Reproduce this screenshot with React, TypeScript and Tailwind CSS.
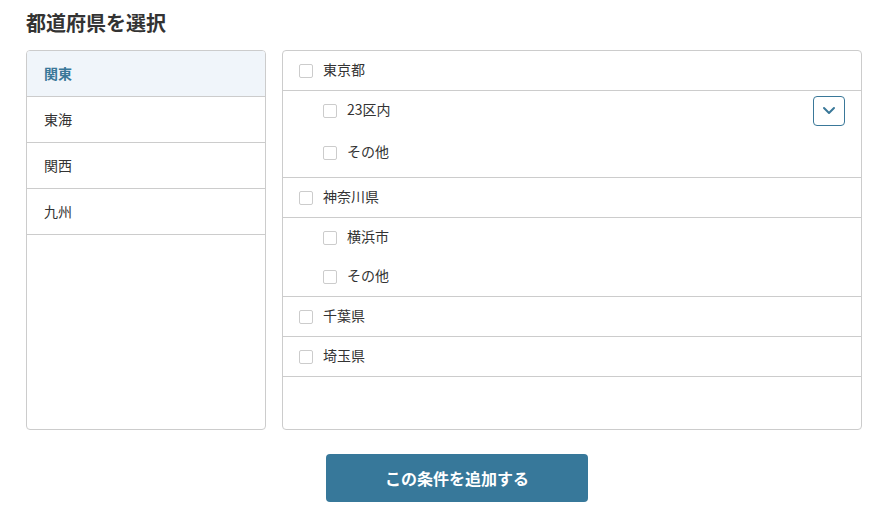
import React from "react";

const font = { fontFamily: '"Noto Sans CJK JP", "Noto Sans", sans-serif' };

function Box() {
  return <span className="block w-[14px] h-[14px] border border-[#cccccc] rounded-[2px] bg-white shrink-0" />;
}

function MainRow({ label }: { label: string }) {
  return (
    <div className="h-[40px] border-b border-[#cccccc] flex items-center pl-[16px] gap-[10px]">
      <Box />
      <span className="text-[14px] text-[#333333] leading-[20px] -mt-[3px]">{label}</span>
    </div>
  );
}

function SubRow({ label, children, extra = "" }: { label: string; children?: React.ReactNode; extra?: string }) {
  return (
    <div className={"h-[39px] flex items-center pl-[40px] gap-[10px] " + extra}>
      <Box />
      <span className="text-[14px] text-[#333333] leading-[20px] -mt-[3px]">{label}</span>
      {children}
    </div>
  );
}

export default function App() {
  return (
    <div className="w-[886px] h-[521px] bg-white pl-[26px] pr-[24px] pt-[9px]" style={font}>
      <h1 className="text-[20px] leading-[28px] font-bold text-[#333333] mb-[13px]">都道府県を選択</h1>
      <div className="flex gap-[16px]">
        <div className="w-[240px] h-[380px] border border-[#cccccc] rounded-[4px] overflow-hidden">
          <div className="h-[46px] border-b border-[#cccccc] bg-[#f0f5fa] flex items-center pl-[17px] text-[14px] leading-[20px] pb-[2px] font-bold text-[#3a7899]">関東</div>
          <div className="h-[46px] border-b border-[#cccccc] flex items-center pl-[17px] text-[14px] leading-[20px] pb-[2px] text-[#333333]">東海</div>
          <div className="h-[46px] border-b border-[#cccccc] flex items-center pl-[17px] text-[14px] leading-[20px] pb-[2px] text-[#333333]">関西</div>
          <div className="h-[46px] border-b border-[#cccccc] flex items-center pl-[17px] text-[14px] leading-[20px] pb-[2px] text-[#333333]">九州</div>
        </div>
        <div className="flex-1 h-[380px] border border-[#cccccc] rounded-[4px] overflow-hidden">
          <MainRow label="東京都" />
          <div className="border-b border-[#cccccc] pb-[5px]">
            <SubRow label="23区内">
              <button className="ml-auto mr-[16px] w-[32px] h-[30px] border border-[#3a7899] rounded-[4px] flex items-center justify-center bg-white">
                <svg width="14" height="9" viewBox="0 0 14 9" fill="none">
                  <path d="M2 2 L7 7 L12 2" stroke="#3a7899" strokeWidth="2" strokeLinecap="round" strokeLinejoin="round" />
                </svg>
              </button>
            </SubRow>
            <SubRow label="その他" extra="mt-[3px]" />
          </div>
          <MainRow label="神奈川県" />
          <div className="border-b border-[#cccccc]">
            <SubRow label="横浜市" />
            <SubRow label="その他" />
          </div>
          <MainRow label="千葉県" />
          <MainRow label="埼玉県" />
        </div>
      </div>
      <div className="flex justify-center mt-[24px]">
        <button className="ml-[26px] w-[262px] h-[48px] rounded-[4px] bg-[#37789a] text-white text-[16px] font-bold">
          この条件を追加する
        </button>
      </div>
    </div>
  );
}
